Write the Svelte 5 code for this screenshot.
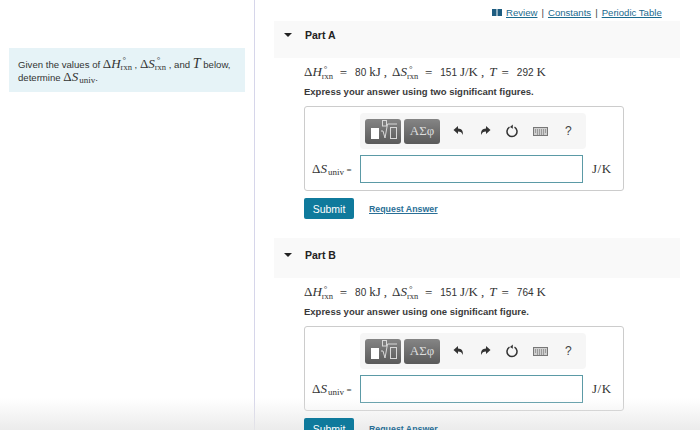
<script>
  const parts = [
    { name: 'Part A', temp: '292', hint: 'Express your answer using two significant figures.' },
    { name: 'Part B', temp: '764', hint: 'Express your answer using one significant figure.' },
  ]
</script>

{#snippet rxn(letter)}
  <span class="m">Δ<i>{letter}</i></span><span class="stack"><span class="deg">°</span><span class="sub">rxn</span></span>
{/snippet}

<div class="page">
  <aside class="side">
    <div class="intro">
      Given the values of {@render rxn('H')}<span class="comma">,</span> {@render rxn('S')}<span class="comma">,</span> and <i class="m big">T</i> below,<br />
      determine <span class="m">Δ<i>S</i></span><span class="m low">univ</span>.
    </div>
  </aside>

  <main class="main">
    <nav class="links">
      <svg class="book" width="10" height="7" viewBox="0 0 10 7"><path d="M0 0h4.500v7H0zM5.500 0H10v7H5.500z" fill="#1d5c80" /></svg>
      <a href="#r" class="first">Review</a><span class="sep">|</span><a href="#c">Constants</a><span class="sep">|</span><a href="#p">Periodic Table</a>
    </nav>

    {#each parts as part}
      <section class="part">
        <header class="part-head">
          <span class="caret"></span>
          <strong>{part.name}</strong>
        </header>
        <div class="body">
          <p class="values">
            {@render rxn('H')}<span class="eq">=</span><span class="num">80</span><span class="m">kJ</span><span class="m cm">,</span>{@render rxn('S')}<span class="eq">=</span><span class="num">151</span><span class="m">J/K</span><span class="m cm">,</span><i class="m">T</i><span class="eq">=</span><span class="num">{part.temp}</span><span class="m">K</span>
          </p>
          <p class="hint">{part.hint}</p>
          <div class="answer">
            <div class="toolbar">
              <button class="tool" aria-label="templates">
                <svg width="34" height="26" viewBox="0 0 34 26" fill="none">
                  <rect x="5" y="10" width="8" height="11" fill="#fff" />
                  <path d="M15 13h2l2 7 2.500-14H31" stroke="#d8d8d8" />
                  <rect x="16.500" y="2.500" width="4" height="5.500" stroke="#d8d8d8" />
                  <rect x="24.500" y="9.500" width="6" height="11" stroke="#d8d8d8" />
                </svg>
              </button>
              <button class="tool greek">ΑΣφ</button>
              <div class="actions">
                <svg width="12" height="12" viewBox="0 0 12 12"><path d="M5 1 0.500 5 5 9V6.400c2.600 0 4 .9 4.800 3.600.6-3.800-1-6.200-4.800-6.400z" fill="#333" /></svg>
                <svg width="12" height="12" viewBox="0 0 12 12"><path d="M7 1l4.500 4L7 9V6.400c-2.600 0-4 .9-4.800 3.600C1.600 6.200 3.200 3.800 7 3.600z" fill="#333" /></svg>
                <svg width="14" height="14" viewBox="0 0 14 14" fill="none"><path d="M4.500 3.200a5 5 0 1 0 5 0" stroke="#333" stroke-width="1.500" /><path d="M7.800 0.500v4.300L5 3z" fill="#333" /></svg>
                <svg width="15" height="9" viewBox="0 0 15 9"><rect x=".5" y=".5" width="14" height="8" fill="#cfcfcf" stroke="#777" /><path d="M2 3h11M2 5h11M4 7h7" stroke="#666" stroke-dasharray="1 1" /></svg>
                <span class="help">?</span>
              </div>
            </div>
            <div class="entry">
              <span class="label"><span class="m">Δ<i>S</i></span><span class="m low">univ</span> <span class="lbl-eq">=</span></span>
              <input type="text" aria-label="answer" />
              <span class="m unit">J/K</span>
            </div>
          </div>
          <div class="foot">
            <button class="submit">Submit</button>
            <a href="#a" class="request">Request Answer</a>
          </div>
        </div>
      </section>
    {/each}
  </main>

  <div class="fade"></div>
</div>

<style>
  :global(body) { margin: 0; background: #fff; }

  .page {
    position: relative;
    display: flex;
    width: 700px;
    height: 430px;
    overflow: hidden;
    font-family: "Liberation Sans", Arial, sans-serif;
    color: #333;
  }

  .side {
    width: 255px;
    flex-shrink: 0;
    border-right: 1px solid #d6d6ea;
    padding: 48px 0 0 9px;
    box-sizing: border-box;
  }
  .intro {
    width: 236px;
    height: 44px;
    box-sizing: border-box;
    padding: 10px 0 0 9px;
    background: #e6f3f7;
    font-size: 9.600px;
    line-height: 12px;
    white-space: nowrap;
  }

  .m { font-family: "Liberation Serif", "Times New Roman", serif; font-size: 13px; line-height: 12px; }
  .big { font-size: 14px; }
  .low { font-size: 9px; position: relative; top: 2px; margin-left: 1px; }
  .stack {
    display: inline-block;
    position: relative;
    width: 13px;
    height: 10px;
    font-family: "Liberation Serif", serif;
    font-size: 8.500px;
    line-height: 8px;
  }
  .deg { position: absolute; left: 2px; top: -2px; font-size: 9px; font-weight: normal; }
  .sub { position: absolute; left: 0; top: 5px; }
  .comma { margin-left: 1px; }

  .main { flex: 1; padding-left: 19px; min-width: 0; }

  .links {
    height: 21px;
    box-sizing: border-box;
    padding: 4px 0 0 218px;
    display: flex;
    align-items: center;
    font-size: 9.600px;
    white-space: nowrap;
  }
  .links a { color: #1a6a8e; text-decoration: underline; }
  .links .first { margin-left: 4px; }
  .sep { margin: 0 4px; color: #444; }
  .book { flex-shrink: 0; }

  .part { width: 406px; }
  .part + .part { margin-top: 19px; }
  .part-head {
    display: flex;
    gap: 13px;
    height: 37px;
    padding: 8px 0 0 10px;
    box-sizing: border-box;
    align-items: flex-start;
    background: #f9f9f9;
    font-size: 10.500px;
    line-height: 13px;
    color: #222;
  }
  .part + .part .part-head { height: 40px; padding-top: 11px; }
  .caret {
    width: 0;
    height: 0;
    margin-top: 4px;
    border-left: 4px solid transparent;
    border-right: 4px solid transparent;
    border-top: 4px solid #222;
  }

  .body { padding-left: 30px; }
  .values {
    margin: 0;
    padding-top: 1px;
    height: 27px;
    box-sizing: border-box;
    font-size: 13px;
    line-height: 15px;
    white-space: nowrap;
    display: flex;
    align-items: center;
  }
  .eq { font-family: "Liberation Serif", serif; font-size: 13px; margin: 0 8px 0 5px; }
  .num { font-size: 10px; margin-right: 3px; }
  .cm { margin: 0 5px 0 3px; }
  .hint {
    margin: 0;
    height: 21px;
    box-sizing: border-box;
    font-size: 9.500px;
    line-height: 14px;
    font-weight: bold;
    color: #3a3a3a;
    white-space: nowrap;
  }

  .answer {
    width: 320px;
    height: 85px;
    box-sizing: border-box;
    border: 1px solid #ccc;
    border-radius: 3px;
    padding: 6px 0 0 55px;
  }
  .toolbar {
    width: 226px;
    height: 36px;
    box-sizing: border-box;
    display: flex;
    align-items: center;
    gap: 3px;
    padding-left: 5px;
    background: #f6f6f6;
    border-radius: 4px;
  }
  .tool {
    width: 36px;
    height: 25px;
    padding: 0;
    border: none;
    border-radius: 3px;
    background: linear-gradient(#858585, #5a5a5a);
    color: #ddd;
    display: flex;
    align-items: center;
    justify-content: center;
  }
  .greek { font-family: "Liberation Serif", serif; font-size: 13px; }
  .actions {
    display: flex;
    align-items: center;
    gap: 14px;
    margin-left: 10px;
  }
  .help { font-size: 12px; color: #444; margin-left: 3px; }

  .entry {
    display: flex;
    align-items: center;
    margin-top: 6px;
    position: relative;
    margin-left: -48px;
  }
  .label { width: 48px; white-space: nowrap; font-size: 9px; }
  .lbl-eq { font-family: "Liberation Serif", serif; font-size: 9px; }
  input {
    width: 223px;
    height: 28px;
    box-sizing: border-box;
    border: 1px solid #5b9aa6;
    background: #fff;
    padding: 0;
  }
  .unit { margin-left: 9px; font-size: 13px; letter-spacing: 0.5px; }

  .foot {
    position: relative;
    z-index: 1;
    display: flex;
    align-items: center;
    gap: 15px;
    margin-top: 7px;
  }
  .submit {
    width: 50px;
    height: 21px;
    padding: 0;
    border: none;
    border-radius: 2px;
    background: #0f7a9c;
    color: #fff;
    font-family: inherit;
    font-size: 10.500px;
  }
  .request {
    font-size: 8.800px;
    font-weight: bold;
    color: #2a6f96;
    text-decoration: underline;
  }

  .fade {
    position: absolute;
    left: 0;
    right: 0;
    bottom: 0;
    height: 32px;
    background: linear-gradient(rgba(235, 235, 235, 0), rgba(232, 232, 232, 0.85));
    pointer-events: none;
  }
</style>
